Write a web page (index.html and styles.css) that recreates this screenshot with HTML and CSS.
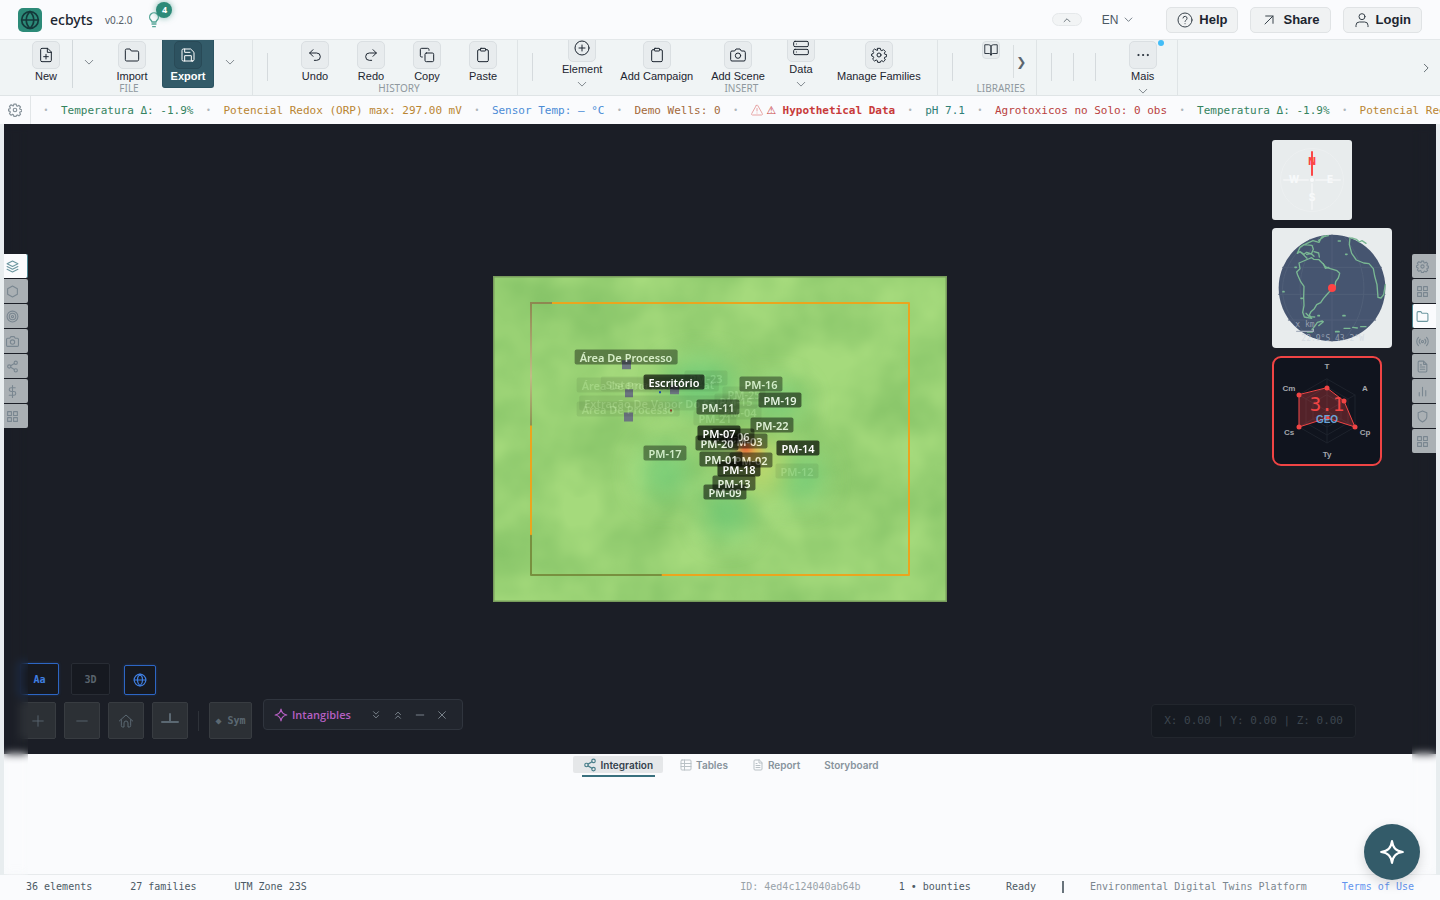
FILE: index.html
```html
<!DOCTYPE html>
<html lang="en">
<head>
<meta charset="utf-8">
<title>ecbyts</title>
<link rel="stylesheet" href="styles.css">
</head>
<body>
<svg class="defs" aria-hidden="true">
  <symbol id="globe" viewBox="0 0 24 24"><circle cx="12" cy="12" r="10"/><path d="M2 12h20M12 2c-6 5.500-6 14.500 0 20M12 2c6 5.500 6 14.500 0 20"/></symbol>
  <symbol id="bulb" viewBox="0 0 24 24"><path d="M9 18h6M10 22h4M15 15c.3-1.300.8-1.800 1.600-2.700A6.500 6.500 0 1 0 7.400 12.300C8.200 13.200 8.700 13.700 9 15z"/></symbol>
  <symbol id="newfile" viewBox="0 0 24 24"><path d="M14 2H6a2 2 0 0 0-2 2v16a2 2 0 0 0 2 2h12a2 2 0 0 0 2-2V8zM14 2v6h6M12 11v7M8.500 14.500h7"/></symbol>
  <symbol id="folder" viewBox="0 0 24 24"><path d="M22 19a2 2 0 0 1-2 2H4a2 2 0 0 1-2-2V5a2 2 0 0 1 2-2h5l2 3h9a2 2 0 0 1 2 2z"/></symbol>
  <symbol id="save" viewBox="0 0 24 24"><path d="M19 21H5a2 2 0 0 1-2-2V5a2 2 0 0 1 2-2h11l5 5v11a2 2 0 0 1-2 2zM17 21v-8H7v8M7 3v5h8"/></symbol>
  <symbol id="undo" viewBox="0 0 24 24"><path d="M9 14 4 9l5-5M4 9h10.500a5.500 5.500 0 0 1 0 11H11"/></symbol>
  <symbol id="redo" viewBox="0 0 24 24"><path d="m15 14 5-5-5-5M20 9H9.500a5.500 5.500 0 0 0 0 11H13"/></symbol>
  <symbol id="copy" viewBox="0 0 24 24"><rect x="9" y="9" width="13" height="13" rx="2"/><path d="M5 15H4a2 2 0 0 1-2-2V4a2 2 0 0 1 2-2h9a2 2 0 0 1 2 2v1"/></symbol>
  <symbol id="clip" viewBox="0 0 24 24"><path d="M16 4h2a2 2 0 0 1 2 2v14a2 2 0 0 1-2 2H6a2 2 0 0 1-2-2V6a2 2 0 0 1 2-2h2"/><rect x="8" y="2" width="8" height="4" rx="1"/></symbol>
  <symbol id="pluscircle" viewBox="0 0 24 24"><circle cx="12" cy="12" r="10.500"/><path d="M12 7.500v9M7.500 12h9"/></symbol>
  <symbol id="camera" viewBox="0 0 24 24"><path d="M23 19a2 2 0 0 1-2 2H3a2 2 0 0 1-2-2V8a2 2 0 0 1 2-2h4l2-3h6l2 3h4a2 2 0 0 1 2 2z"/><circle cx="12" cy="13" r="4"/></symbol>
  <symbol id="server" viewBox="0 0 24 24"><rect x="1" y="2" width="22" height="8" rx="2"/><rect x="1" y="14" width="22" height="8" rx="2"/><path d="M5 6h.1M5 18h.1"/></symbol>
  <symbol id="gear" viewBox="0 0 24 24"><circle cx="12" cy="12" r="3"/><path d="M10 2h4l.7 2.900 1.500.6 2.500-1.500 2.800 2.800-1.500 2.500.6 1.500 2.900.7v3l-2.900.8-.6 1.400 1.500 2.600-2.800 2.700-2.500-1.500-1.500.6L14 23h-4l-.7-2.900-1.500-.6L5.300 21l-2.800-2.700L4 15.700l-.6-1.400-2.400-.8v-3l2.400-.7L4 8.300 2.500 5.800 5.300 3l2.500 1.500L9.300 4.900z"/></symbol>
  <symbol id="book" viewBox="0 0 24 24"><path d="M2 3h6a4 4 0 0 1 4 4v14a3 3 0 0 0-3-3H2zM22 3h-6a4 4 0 0 0-4 4v14a3 3 0 0 1 3-3h7z"/></symbol>
  <symbol id="dots" viewBox="0 0 24 24"><g fill="currentColor"><circle cx="4" cy="12" r="1"/><circle cx="12" cy="12" r="1"/><circle cx="20" cy="12" r="1"/></g></symbol>
  <symbol id="down" viewBox="0 0 24 24"><path d="m3 8 9 9 9-9"/></symbol>
  <symbol id="up" viewBox="0 0 24 24"><path d="m5 16 7-7 7 7"/></symbol>
  <symbol id="right" viewBox="0 0 24 24"><path d="m8 3 9 9-9 9"/></symbol>
  <symbol id="help" viewBox="0 0 24 24"><circle cx="12" cy="12" r="10.500"/><path d="M9 9a3 3 0 0 1 6 1c0 2-3 2.500-3 4M12 17.500h.1"/></symbol>
  <symbol id="share" viewBox="0 0 24 24"><path d="M6 18 18 6M7 6h11v11"/></symbol>
  <symbol id="user" viewBox="0 0 24 24"><circle cx="12" cy="7" r="4.500"/><path d="M3 22v-2a5 5 0 0 1 5-5h8a5 5 0 0 1 5 5v2"/></symbol>
  <symbol id="warn" viewBox="0 0 24 24"><path d="M10.500 3 1.500 19a2 2 0 0 0 1.500 3h18a2 2 0 0 0 1.500-3l-9-16a1.700 1.700 0 0 0-3 0zM12 9v5M12 18h.1"/></symbol>
  <symbol id="layers" viewBox="0 0 24 24"><path d="m12 2 10 5-10 5L2 7zM2 12l10 5 10-5M2 17l10 5 10-5"/></symbol>
  <symbol id="hex" viewBox="0 0 24 24"><path d="m12 2 9 5v10l-9 5-9-5V7z"/></symbol>
  <symbol id="target" viewBox="0 0 24 24"><circle cx="12" cy="12" r="10"/><circle cx="12" cy="12" r="6"/><circle cx="12" cy="12" r="2"/></symbol>
  <symbol id="nodes" viewBox="0 0 24 24"><circle cx="18" cy="5" r="3"/><circle cx="6" cy="12" r="3"/><circle cx="18" cy="19" r="3"/><path d="m8.600 13.500 6.800 4M15.400 6.500l-6.800 4"/></symbol>
  <symbol id="dollar" viewBox="0 0 24 24"><path d="M12 1v22M17 5H9.500a3.500 3.500 0 0 0 0 7h5a3.500 3.500 0 0 1 0 7H6"/></symbol>
  <symbol id="grid" viewBox="0 0 24 24"><path d="M3 3h7v7H3zM14 3h7v7h-7zM3 14h7v7H3zM14 14h7v7h-7z"/></symbol>
  <symbol id="radio" viewBox="0 0 24 24"><circle cx="12" cy="12" r="2"/><path d="M16.200 7.800a6 6 0 0 1 0 8.400M7.800 16.200a6 6 0 0 1 0-8.400M19.500 4.500a10.600 10.600 0 0 1 0 15M4.500 19.500a10.600 10.600 0 0 1 0-15"/></symbol>
  <symbol id="doc" viewBox="0 0 24 24"><path d="M14 2H6a2 2 0 0 0-2 2v16a2 2 0 0 0 2 2h12a2 2 0 0 0 2-2V8zM14 2v6h6M16 13H8M16 17H8M10 9H8"/></symbol>
  <symbol id="bars" viewBox="0 0 24 24"><path d="M18 20V10M12 20V4M6 20v-6"/></symbol>
  <symbol id="shield" viewBox="0 0 24 24"><path d="M12 22s8-4 8-10V5l-8-3-8 3v7c0 6 8 10 8 10z"/></symbol>
  <symbol id="home" viewBox="0 0 24 24"><path d="m2 12 10-9 10 9M5 10v9a2 2 0 0 0 2 2h2v-6a3 3 0 0 1 6 0v6h2a2 2 0 0 0 2-2v-9"/></symbol>
  <symbol id="spark" viewBox="0 0 24 24"><path d="M12 2c1 6.500 3.500 9 10 10-6.500 1-9 3.500-10 10-1-6.500-3.500-9-10-10 6.500-1 9-3.500 10-10z"/></symbol>
  <symbol id="table" viewBox="0 0 24 24"><rect x="2" y="2" width="20" height="20" rx="2"/><path d="M2 9h20M2 15h20M9 2v20"/></symbol>
  <symbol id="ddown" viewBox="0 0 24 24"><path d="m6 4 6 6 6-6M6 13l6 6 6-6"/></symbol>
  <symbol id="dup" viewBox="0 0 24 24"><path d="m6 11 6-6 6 6M6 20l6-6 6 6"/></symbol>
  <symbol id="x" viewBox="0 0 24 24"><path d="m4 4 16 16M20 4 4 20"/></symbol>
  <symbol id="minus" viewBox="0 0 24 24"><path d="M3 12h18"/></symbol>
  <symbol id="plus" viewBox="0 0 24 24"><path d="M3 12h18M12 3v18"/></symbol>
</svg>

<header class="top">
  <span class="logo"><svg class="i20"><use href="#globe"/></svg></span>
  <span class="brand">ecbyts</span>
  <span class="version">v0.2.0</span>
  <button class="tips" aria-label="Tips"><svg class="i16"><use href="#bulb"/></svg><span class="badge">4</span></button>
  <span class="grow"></span>
  <button class="collapse" aria-label="Collapse"><svg class="i10"><use href="#up"/></svg></button>
  <button class="lang">EN <svg class="i9"><use href="#down"/></svg></button>
  <div class="actions">
    <button class="action"><svg class="i16"><use href="#help"/></svg>Help</button>
    <button class="action"><svg class="i16"><use href="#share"/></svg>Share</button>
    <button class="action"><svg class="i16"><use href="#user"/></svg>Login</button>
  </div>
</header>

<nav class="ribbon">
  <section class="group file">
    <div class="col">
      <div class="tools">
        <button class="tool"><span class="tile"><svg class="i16"><use href="#newfile"/></svg></span><span class="name">New</span></button>
        <button class="split" aria-label="New options"><svg class="i10 chev"><use href="#down"/></svg></button>
        <button class="tool"><span class="tile"><svg class="i16"><use href="#folder"/></svg></span><span class="name">Import</span></button>
        <button class="tool on"><span class="tile"><svg class="i16"><use href="#save"/></svg></span><span class="name">Export</span></button>
        <button class="more" aria-label="Export options"><svg class="i10 chev"><use href="#down"/></svg></button>
      </div>
      <span class="caption">FILE</span>
    </div>
  </section>
  <section class="group">
    <i class="sep"></i>
    <div class="col">
      <div class="tools wide">
        <button class="tool"><span class="tile"><svg class="i16"><use href="#undo"/></svg></span><span class="name">Undo</span></button>
        <button class="tool"><span class="tile"><svg class="i16"><use href="#redo"/></svg></span><span class="name">Redo</span></button>
        <button class="tool"><span class="tile"><svg class="i16"><use href="#copy"/></svg></span><span class="name">Copy</span></button>
        <button class="tool"><span class="tile"><svg class="i16"><use href="#clip"/></svg></span><span class="name">Paste</span></button>
      </div>
      <span class="caption">HISTORY</span>
    </div>
  </section>
  <section class="group">
    <i class="sep"></i>
    <div class="col">
      <div class="tools">
        <button class="tool tall"><span class="tile"><svg class="i16"><use href="#pluscircle"/></svg></span><span class="name">Element</span><svg class="i10 chev"><use href="#down"/></svg></button>
        <button class="tool"><span class="tile"><svg class="i16"><use href="#clip"/></svg></span><span class="name">Add Campaign</span></button>
        <button class="tool"><span class="tile"><svg class="i16"><use href="#camera"/></svg></span><span class="name">Add Scene</span></button>
        <button class="tool tall"><span class="tile"><svg class="i16"><use href="#server"/></svg></span><span class="name">Data</span><svg class="i10 chev"><use href="#down"/></svg></button>
        <button class="tool"><span class="tile"><svg class="i16"><use href="#gear"/></svg></span><span class="name">Manage Families</span></button>
      </div>
      <span class="caption">INSERT</span>
    </div>
  </section>
  <section class="group">
    <i class="sep"></i>
    <div class="col">
      <div class="tools">
        <button class="tool small" aria-label="Library"><span class="tile"><svg class="i14"><use href="#book"/></svg></span></button>
        <button class="expand" aria-label="More libraries">❯</button>
      </div>
      <span class="caption">LIBRARIES</span>
    </div>
  </section>
  <section class="group">
    <i class="sep"></i><i class="sep"></i><i class="sep"></i>
    <div class="col">
      <div class="tools">
        <button class="tool"><span class="tile"><svg class="i14"><use href="#dots"/></svg></span><span class="name">Mais</span><svg class="i10 chev"><use href="#down"/></svg><span class="dot"></span></button>
      </div>
    </div>
  </section>
  <button class="scroll" aria-label="Scroll"><svg class="i10"><use href="#right"/></svg></button>
</nav>

<div class="ticker">
  <button class="cog" aria-label="Ticker settings"><svg class="i14"><use href="#gear"/></svg></button>
  <div class="feed">
    <i>•</i><span class="green">Temperatura Δ: -1.9%</span>
    <i>•</i><span class="amber">Potencial Redox (ORP) max: 297.00 mV</span>
    <i>•</i><span class="blue">Sensor Temp: — °C</span>
    <i>•</i><span class="brown">Demo Wells: 0</span>
    <i>•</i><span class="alert"><svg class="i12"><use href="#warn"/></svg><b class="sign">⚠</b><b>Hypothetical Data</b></span>
    <i>•</i><span class="teal">pH 7.1</span>
    <i>•</i><span class="red">Agrotoxicos no Solo: 0 obs</span>
    <i>•</i><span class="green">Temperatura Δ: -1.9%</span>
    <i>•</i><span class="amber">Potencial Redox (ORP) max: 297.00 mV</span>
  </div>
</div>

<main class="work">
  <div class="viewport">
    <div class="stage">
      <svg class="terrain" viewBox="0 0 454 325" preserveAspectRatio="none">
        <defs>
          <filter id="mottle" x="0" y="0" width="100%" height="100%" color-interpolation-filters="sRGB"><feTurbulence type="fractalNoise" baseFrequency=".016" numOctaves="3" seed="8"/><feColorMatrix values="0 0 0 0 .53  0 0 0 0 .77  0 0 0 0 .41  1.700 0 0 0 -.4"/></filter>
          <filter id="soft" x="-80%" y="-80%" width="260%" height="260%" color-interpolation-filters="sRGB"><feGaussianBlur stdDeviation="14"/></filter>
          <filter id="tight" x="-80%" y="-80%" width="260%" height="260%" color-interpolation-filters="sRGB"><feGaussianBlur stdDeviation="4"/></filter>
          <linearGradient id="fade" x1="0" y1="0" x2="0" y2="1"><stop offset="0" stop-color="#8d8750"/><stop offset=".6" stop-color="#c0bd86"/><stop offset="1" stop-color="#8b9250"/></linearGradient>
        </defs>
        <rect width="454" height="325" fill="#a5da7c"/>
        <rect width="454" height="325" filter="url(#mottle)"/>
        <g filter="url(#soft)" fill="#62ca7a">
          <ellipse cx="308" cy="201" rx="20" ry="22" opacity=".75"/><ellipse cx="234" cy="235" rx="22" ry="26" opacity=".65"/>
          <ellipse cx="172" cy="196" rx="24" ry="26" opacity=".6"/><ellipse cx="208" cy="108" rx="34" ry="24" opacity=".7"/><ellipse cx="285" cy="126" rx="24" ry="18" opacity=".6"/>
          <ellipse cx="268" cy="188" rx="28" ry="28" fill="#c8d868" opacity=".7"/>
        </g>
        <g filter="url(#tight)"><circle cx="258" cy="176" r="12" fill="#e6b04a" opacity=".8"/><circle cx="252" cy="171" r="6" fill="#f03a28"/></g>
        <path d="M59 27h357v271H168" fill="none" stroke="#eba51e" stroke-width="2"/>
        <path d="M38 149v110" stroke="#eba51e" stroke-width="2"/>
        <path d="M168 298H38v-39" fill="none" stroke="#78903f" stroke-width="2"/>
        <path d="M59 26H37v123h2V28h20z" fill="url(#fade)"/>
        <g fill="#6c7580"><path d="M129 84h9v9h-9zM132 113h8v8h-8zM131 136h9v9h-9zM177 109h9v9h-9z"/></g>
        <path d="M166 115h2v2h-2z" fill="#2050b0"/><path d="M177 133h2v2h-2z" fill="#9a5030"/>
        <path d="M0 .5h454M0 324.500h454M.5 0v325M453.500 0v325" stroke="#789c5c"/>
      </svg>
      <span class="tag t1" style="left:135px;top:109px">Área De Processo</span>
      <span class="tag t1" style="left:167px;top:108px">Sistema De Air Treat</span>
      <span class="tag t1" style="left:162px;top:127px">Extração De Vapor Do Solo</span>
      <span class="tag t1" style="left:135px;top:133px">Área De Processo</span>
      <span class="tag t1" style="left:213px;top:102px">PM-23</span>
      <span class="tag t1" style="left:251px;top:118px">PM-25</span>
      <span class="tag t1" style="left:243px;top:125px">PM-15</span>
      <span class="tag t1" style="left:247px;top:136px">PM-04</span>
      <span class="tag t1" style="left:222px;top:142px">PM-21</span>
      <span class="tag t1" style="left:304px;top:195px">PM-12</span>
      <span class="tag t2" style="left:133px;top:81px">Área De Processo</span>
      <span class="tag t2" style="left:172px;top:177px">PM-17</span>
      <span class="tag t3" style="left:253px;top:165px">PM-03</span>
      <span class="tag t3" style="left:240px;top:160px">PM-06</span>
      <span class="tag t2" style="left:268px;top:108px">PM-16</span>
      <span class="tag t3" style="left:225px;top:131px">PM-11</span>
      <span class="tag t3" style="left:279px;top:149px">PM-22</span>
      <span class="tag t3" style="left:258px;top:184px">PM-02</span>
      <span class="tag t4" style="left:287px;top:124px">PM-19</span>
      <span class="tag t4" style="left:224px;top:167px">PM-20</span>
      <span class="tag t5" style="left:246px;top:193px">PM-18</span>
      <span class="tag t4" style="left:228px;top:183px">PM-01</span>
      <span class="tag t4" style="left:232px;top:216px">PM-09</span>
      <span class="tag t4" style="left:241px;top:207px">PM-13</span>
      <span class="tag t5" style="left:226px;top:157px">PM-07</span>
      <span class="tag t5" style="left:305px;top:172px">PM-14</span>
      <span class="tag t5" style="left:181px;top:106px">Escritório</span>
    </div>

    <div class="widgets">
      <svg class="compass" viewBox="0 0 80 80"><rect width="80" height="80" rx="3" fill="#e8eced"/><circle cx="40" cy="40" r="31.500" fill="none" stroke="#edf0f1"/><path d="M12 40h24M44 40h24M40 44v25" stroke="#f1f3f4" stroke-width="2"/><circle cx="40" cy="40" r="2" fill="#f8fafa"/><path d="M40 12v23" stroke="#fb4747" stroke-width="2"/><g class="ctext"><text x="40" y="25" fill="#fb4747">N</text><text x="22" y="43">W</text><text x="58" y="43">E</text><text x="40" y="61">S</text></g></svg>
      <svg class="earth" viewBox="96 309 360 360"><rect x="96" y="309" width="360" height="360" rx="12" fill="#e8eced"/><circle cx="276" cy="489" r="160" fill="#465570"/>
        <g fill="none" stroke="#505f78" stroke-width="3"><path d="M128 427h296M116 508h319M145 585h262M276 330v318M240 335c-80 90-80 220 0 308M312 335c80 90 80 220 0 308M210 344c-110 90-110 210 0 290"/></g>
        <g fill="none" stroke="#7ab893" stroke-width="4" stroke-linejoin="round">
          <path d="m205 402 10-4 6 5 16 1 12 12 8 10 14 5 20 6 8 8-4 14-8 11-2 15-14 12-9 10-12 14-8 12-12 6-7 12-10 9-5 10 7 10-22-4-5-14 4-20-1-24 1-34-10-14-9-20-3-9 10-10-3-17z"/>
          <path d="m201 400-12-12-9-8-8 5 8-18 12-8 24 2 4 12-6 14-14-5-8 6-12-8M200 388l14-2 8 8M193 359l26-12 18 5 8-16 20-4M222 380l14 4 2 12M236 346l20-14"/>
          <path d="m330 337-2 22 7 26 14 20 22 9 16 2 13 15 4 22 7 26 3 38 9 2 8-10 5-30M335 339l14 4 9 8 8-4 12 8"/>
          <path d="m198 565 10 10 16 1M250 416l6 14 10-3M247 588l-15 4-8 12-8 10M250 590l-14 12M202 621h15M312 610h18M338 607l14 2M362 605h16" />
          <path d="M165 427h4M183 520h4M234 572h4M295 348h6M317 388h4M309 572h6M287 620h10M129 500h3" stroke-width="5"/>
        </g>
        <path d="M170 619h50v-6" fill="none" stroke="#a5afbd" stroke-width="4"/>
        <g class="etext"><text x="166" y="606">x km</text><text x="184" y="648">22.9°S 43.2°W</text></g><circle cx="276" cy="489" r="12" fill="#ff4444"/></svg>
      <svg class="radar" viewBox="0 0 110 110"><rect x="1" y="1" width="108" height="108" rx="8" fill="#10141e" stroke="#f04444" stroke-width="2"/><g fill="none" stroke="#1d222c"><path d="m55 23 28 16v32L55 87 27 71V39zM55 31l21 12v24L55 79 34 67V43zM55 39l14 8v16l-14 8-14-8V47zM55 23v64M27 39l56 32M83 39 27 71"/></g><path d="m55 32 17 13 11 26-28-9-28 9V39z" fill="#ef4444" fill-opacity=".3" stroke="#f04444"/><g fill="#f04444"><circle cx="55" cy="32" r="2.500"/><circle cx="72" cy="45" r="2.500"/><circle cx="83" cy="71" r="2.500"/><circle cx="55" cy="62" r="2.500"/><circle cx="27" cy="71" r="2.500"/><circle cx="27" cy="39" r="2.500"/></g><g class="rtext"><text x="55" y="13">T</text><text x="93" y="35">A</text><text x="93" y="79">Cp</text><text x="55" y="101">Ty</text><text x="17" y="79">Cs</text><text x="17" y="35">Cm</text></g><text class="score" x="55" y="55">3.1</text><text class="geo" x="55" y="67">GEO</text></svg>
    </div>

    <div class="controls">
      <div class="modes"><button class="mode lit">Aa</button><button class="mode">3D</button><button class="mode lit earthmode" aria-label="Globe"><svg class="i14"><use href="#globe"/></svg></button></div>
      <div class="zooms">
        <button class="zoom" aria-label="Zoom in"><svg class="i14"><use href="#plus"/></svg></button>
        <button class="zoom" aria-label="Zoom out"><svg class="i14"><use href="#minus"/></svg></button>
        <button class="zoom" aria-label="Home"><svg class="i16"><use href="#home"/></svg></button>
        <button class="zoom ground" aria-label="Ground"><svg class="i20" viewBox="0 0 20 20"><path d="M2 11h16M10 3v8"/></svg></button>
        <i class="zsep"></i>
        <button class="zoom sym">◆ Sym</button>
      </div>
    </div>
    <div class="floatbar"><svg class="i14"><use href="#spark"/></svg><span>Intangibles</span>
      <button aria-label="Expand"><svg class="i10"><use href="#ddown"/></svg></button><button aria-label="Collapse"><svg class="i10"><use href="#dup"/></svg></button><button aria-label="Minimise"><svg class="i10"><use href="#minus"/></svg></button><button aria-label="Close"><svg class="i10"><use href="#x"/></svg></button>
    </div>
    <div class="coords">X: 0.00 | Y: 0.00 | Z: 0.00</div>
  </div>

  <section class="panel">
    <div class="tabs">
      <button class="tab active"><svg class="i14"><use href="#nodes"/></svg>Integration</button>
      <button class="tab"><svg class="i12"><use href="#table"/></svg>Tables</button>
      <button class="tab"><svg class="i12"><use href="#doc"/></svg>Report</button>
      <button class="tab">Storyboard</button>
    </div>
  </section>

  <aside class="rail left">
    <button class="current" aria-label="Layers"><svg class="i13"><use href="#layers"/></svg></button><button aria-label="Shapes"><svg class="i13"><use href="#hex"/></svg></button><button aria-label="Targets"><svg class="i13"><use href="#target"/></svg></button><button aria-label="Scenes"><svg class="i13"><use href="#camera"/></svg></button><button aria-label="Links"><svg class="i13"><use href="#nodes"/></svg></button><button aria-label="Costs"><svg class="i13"><use href="#dollar"/></svg></button><button aria-label="Grid"><svg class="i13"><use href="#grid"/></svg></button>
  </aside>
  <aside class="rail right">
    <button aria-label="Settings"><svg class="i13"><use href="#gear"/></svg></button><button aria-label="Grid"><svg class="i13"><use href="#grid"/></svg></button><button class="current" aria-label="Files"><svg class="i13"><use href="#folder"/></svg></button><button aria-label="Signals"><svg class="i13"><use href="#radio"/></svg></button><button aria-label="Documents"><svg class="i13"><use href="#doc"/></svg></button><button aria-label="Charts"><svg class="i13"><use href="#bars"/></svg></button><button aria-label="Shield"><svg class="i13"><use href="#shield"/></svg></button><button aria-label="Apps"><svg class="i13"><use href="#grid"/></svg></button>
  </aside>
</main>

<footer class="status">
  <div class="counts"><span>36 elements</span><span>27 families</span><span>UTM Zone 23S</span></div>
  <span class="grow"></span>
  <div class="counts"><span class="pale">ID: 4ed4c124040ab64b</span><span>1 • bounties</span></div><span>Ready</span><i class="bar"></i>
  <span class="mid">Environmental Digital Twins Platform</span><a href="#terms">Terms of Use</a>
</footer>
<button class="fab" aria-label="Assistant"><svg class="i26"><use href="#spark"/></svg></button>
</body>
</html>
```

FILE: styles.css
```css
* { box-sizing: border-box; }
body { margin: 0; height: 100vh; display: flex; flex-direction: column; overflow: hidden; background: #fafbfd; color: #1c2530; font-family: "Liberation Sans", Arial, sans-serif; font-size: 11px; }
button { margin: 0; padding: 0; border: 0; background: none; font: inherit; color: inherit; display: flex; align-items: center; justify-content: center; }
svg { display: block; flex: none; fill: none; stroke: currentColor; stroke-width: 2; stroke-linecap: round; stroke-linejoin: round; }
svg text { stroke: none; }
.defs { position: absolute; width: 0; height: 0; }
.i9 { width: 9px; height: 9px; }
.i10 { width: 10px; height: 10px; }
.i12 { width: 12px; height: 12px; }
.i13 { width: 13px; height: 13px; }
.i14 { width: 14px; height: 14px; }
.i16 { width: 16px; height: 16px; }
.i20 { width: 20px; height: 20px; }
.i26 { width: 26px; height: 26px; }
.grow { flex: 1; }

.top { flex: none; height: 40px; padding: 0 18px; display: flex; align-items: center; border-bottom: 1px solid #e4e8ea; }
.logo { width: 24px; height: 24px; border-radius: 5px; background: #2c8a78; color: #14383a; display: grid; place-items: center; }
.brand { margin-left: 8px; font: 500 14px "Noto Sans", sans-serif; }
.version { margin-left: 12px; font: 10px "Noto Sans", sans-serif; color: #566069; }
.tips { position: relative; margin-left: 14px; width: 16px; height: 24px; color: #54a596; }
.badge { position: absolute; left: 10px; top: -6px; width: 16px; height: 16px; border-radius: 50%; background: #2c8a78; color: #fff; font: bold 9px/16px "Noto Sans", sans-serif; text-align: center; box-shadow: 0 0 6px #2c8a7899; }
.collapse { width: 30px; height: 13px; border: 1px solid #e5e8ea; border-radius: 7px; background: #f2f4f5; color: #556068; stroke-width: 3; }
.lang { margin-left: 20px; gap: 6px; font-size: 12px; color: #4b5864; }
.actions { display: flex; gap: 12px; margin-left: 33px; }
.action { height: 26px; padding: 0 10px; gap: 6px; border: 1px solid #e0e3e5; border-radius: 5px; background: #f0f2f3; font: bold 13px "Liberation Sans", Arial, sans-serif; }
.action svg { color: #38424b; stroke-width: 1.5; }

.ribbon { flex: none; height: 56px; display: flex; overflow: hidden; background: #f0f4f5; border-bottom: 1px solid #dfe4e6; }
.group { flex: none; display: flex; padding: 0 8px 0 14px; border-right: 1px solid #dfe4e6; }
.group.file { padding: 0 14px 0 20px; }
.sep { width: 1px; height: 28px; margin: 13px 21px 0 0; background: #d5dadd; }
.col { display: flex; flex-direction: column; }
.tools { display: flex; gap: 2px; height: 48px; }
.tools.wide { gap: 4px; }
.tool { position: relative; flex-direction: column; justify-content: flex-start; min-width: 52px; height: 48px; padding: 1px 8px 0; }
.tall { padding-top: 0; margin-top: -6px; }
.tile { flex: none; width: 28px; height: 28px; display: grid; place-items: center; border: 1px solid #dadfe2; border-radius: 5px; background: #e8ecee; }
.tile svg { stroke-width: 1.5; }
.name { line-height: 15px; white-space: nowrap; }
.tool .chev { flex: none; margin-top: 2px; }
.chev { color: #6b747b; }
.on { background: #335b69; color: #fff; border: 1px solid #2b5361; border-top: 0; border-radius: 0 0 3px 3px; margin-left: 2px; padding: 1px 7px 0; }
.on .tile { background: #2d5260; border-color: #294a57; }
.on .name { font-weight: bold; }
.split { width: 32px; margin-left: -2px; border-left: 1px solid #d2d8db; padding-bottom: 5px; }
.more { width: 16px; margin-left: 6px; padding-bottom: 5px; }
.caption { height: 15px; margin-top: -7px; font: 10px/15px "Noto Sans", sans-serif; color: #8f989e; text-align: center; }
.small { min-width: 34px; padding-top: 1px; }
.small .tile { width: 18px; height: 18px; border-radius: 4px; }
.expand { width: 16px; height: 33px; margin: 5px -1px 0 3px; border-left: 1px solid #d9dee0; font: 12px "DejaVu Sans", sans-serif; color: #5c666e; }
.dot { position: absolute; right: 5px; top: 0; width: 6px; height: 6px; border-radius: 50%; background: #43bdf7; }
.scroll { margin-left: auto; width: 28px; color: #4b555d; }

.ticker { flex: none; height: 28px; display: flex; overflow: hidden; font: 11px "DejaVu Sans Mono", monospace; }
.cog { flex: none; width: 31px; border-right: 1px solid #e2e6e8; color: #87929a; }
.feed { display: flex; align-items: center; gap: 12px; padding-left: 12px; white-space: nowrap; }
.feed i { width: 6px; font-style: normal; text-align: center; font-size: 8px; color: #aeb6bb; }
.green { color: #35835f; }
.amber { color: #b98532; }
.blue { color: #4b8bd6; }
.brown { color: #a3693a; }
.teal { color: #2f8077; }
.red { color: #b93f40; }
.alert { display: flex; align-items: center; gap: 4px; color: #c83a3a; }
.alert svg { color: #e7a4a4; }
.sign { width: 12px; font-family: "DejaVu Sans", sans-serif; }

.work { position: relative; flex: 1; min-height: 0; display: flex; flex-direction: column; padding: 0 4px; background: #e8edef; }
.viewport { position: relative; flex: 1; display: flex; align-items: center; justify-content: center; background: #1b1e26; }
.stage { position: relative; width: 454px; height: 326px; }
.terrain { width: 100%; height: 100%; stroke: none; }
.tag { position: absolute; transform: translate(-50%, -50%); padding: 0 5px; border-radius: 2px; font: 600 11px/15px "Noto Sans", sans-serif; white-space: nowrap; color: #fff; background: #000000a8; }
.t1 { opacity: .1; }
.t2 { opacity: .6; }
.t3 { opacity: .7; }
.t4 { opacity: .8; }
.t5 { opacity: 1; }

.widgets { position: absolute; top: 16px; right: 44px; width: 120px; display: flex; flex-direction: column; gap: 8px; }
.widgets svg { stroke: none; stroke-width: 1; }
.compass { width: 80px; height: 80px; }
.earth { width: 120px; height: 120px; }
.radar { width: 110px; height: 110px; }
.ctext { font: 800 10px Inter, sans-serif; text-anchor: middle; fill: #f7f9fa; }
.etext { font: 24px "DejaVu Sans Mono", monospace; fill: #c9d1da; fill-opacity: .6; }
.rtext { font: bold 8px "Liberation Sans", sans-serif; text-anchor: middle; fill: #a4a7ad; }
.score { font: 19px "DejaVu Sans Mono", monospace; text-anchor: middle; fill: #f04444; }
.geo { font: bold 10px "Liberation Sans", sans-serif; text-anchor: middle; fill: #6ba3d6; }

.controls { position: absolute; left: 16px; bottom: 15px; display: flex; flex-direction: column; gap: 7px; }
.modes { display: flex; align-items: flex-end; gap: 12px; }
.mode { width: 39px; height: 32px; border: 1px solid #282c34; border-radius: 2px; background: #161920; color: #59636d; font: bold 10px "DejaVu Sans Mono", monospace; }
.lit { border-color: #2d66c4; color: #3f7ee0; box-shadow: 0 0 3px #2d66c455; }
.earthmode { width: 32px; height: 30px; margin-left: 2px; }
.zooms { display: flex; align-items: center; gap: 8px; }
.zoom { width: 36px; height: 37px; border: 1px solid #383c41; border-radius: 2px; background: #2c3035; color: #5b6872; font: bold 11px "DejaVu Sans Mono", monospace; }
.zoom svg { stroke-width: 1.5; }
.ground svg { stroke-width: 2; }
.sym { width: 43px; font-size: 10px; }
.zsep { width: 1px; height: 20px; margin: 0 2px; background: #2e3239; }
.floatbar { position: absolute; left: 259px; bottom: 24px; width: 200px; height: 31px; padding: 0 14px 0 10px; display: flex; align-items: center; gap: 10px; border: 1px solid #30353e; border-radius: 4px; background: #21252d; color: #8a949c; }
.floatbar > svg { color: #b55fc2; margin-right: -6px; }
.floatbar span { flex: 1; font: 600 11px "Open Sans", sans-serif; color: #b55fc2; }
.floatbar button { width: 12px; }
.coords { position: absolute; right: 80px; bottom: 16px; padding: 0 12px; border: 1px solid #22262d; border-radius: 4px; background: #161a21; color: #3d464f; font: 11px/32px "DejaVu Sans Mono", monospace; }

.panel { flex: none; height: 121px; background: #fafbfd; border-bottom: 1px solid #e7eaec; }
.tabs { display: flex; justify-content: center; gap: 10px; padding: 2px 0 0 18px; }
.tab { position: relative; height: 17px; gap: 4px; padding: 0 7px; border-radius: 2px; font: 600 10px Inter, sans-serif; color: #87939c; }
.tab svg { color: #b9c1c6; }
.tab.active { padding: 0 10px; background: #e5e7e9; color: #34414c; }
.tab.active svg { color: #4a7f8b; }
.tab.active::after { content: ""; position: absolute; left: 9px; right: 8px; bottom: -4px; height: 2px; background: #39707e; }

.rail { position: absolute; top: 0; bottom: 0; width: 24px; padding-top: 130px; display: flex; flex-direction: column; gap: 1px; backdrop-filter: blur(4px); }
.left { left: 4px; }
.right { right: 4px; }
.rail button { height: 24px; padding-right: 7px; background: #aab0b4; color: #798690; border-radius: 0 2px 2px 0; }
.right button { border-radius: 2px 0 0 2px; padding-right: 4px; }
.rail .current { background: #fafbfd; color: #6c97a0; }
.left .current { border-right: 1px solid #4a8592; }
.right .current { border-left: 1px solid #4a8592; }

.status { flex: none; height: 25px; display: flex; align-items: center; gap: 35px; padding: 0 26px 2px; font: 10px "DejaVu Sans Mono", monospace; color: #4c5a65; }
.counts { display: flex; gap: 38px; }
.pale { color: #98a2a9; }
.mid { color: #7a868f; margin-left: -9px; }
.bar { width: 2px; height: 12px; margin-left: -9px; background: #68737b; }
.status a { color: #6294ee; text-decoration: none; }
.fab { position: absolute; right: 20px; bottom: 20px; width: 56px; height: 56px; border-radius: 50%; background: #335b69; color: #fff; box-shadow: 0 4px 12px #00000026; }
```
